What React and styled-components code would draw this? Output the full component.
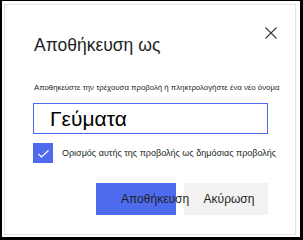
import React from "react";
import styled, { createGlobalStyle } from "styled-components";

const GlobalStyle = createGlobalStyle`
  html, body {
    margin: 0;
    padding: 0;
    background: #fff;
  }
  body {
    font-family: "Liberation Sans", Arial, sans-serif;
    color: #201f1e;
  }
`;

function App() {
  return (
    <>
      <GlobalStyle />
      <Frame>
        <Dialog>
          <Header>
            <Title>Αποθήκευση ως</Title>
            <CloseBtn aria-label="Κλείσιμο">
              <svg width="12" height="12" viewBox="0 0 12 12">
                <path
                  d="M0.5 0.5 L11.5 11.5 M11.5 0.5 L0.5 11.5"
                  stroke="#3b3a39"
                  strokeWidth="1.1"
                  fill="none"
                />
              </svg>
            </CloseBtn>
          </Header>
          <Subtitle>
            Αποθηκεύστε την τρέχουσα προβολή ή πληκτρολογήστε ένα νέο όνομα
          </Subtitle>
          <NameInput defaultValue="Γεύματα" />
          <CheckRow>
            <CheckBox>
              <svg width="20" height="20" viewBox="0 0 20 20">
                <polyline
                  points="5.5,11 8.5,14 15.5,7.5"
                  stroke="#fff"
                  strokeWidth="1.2"
                  fill="none"
                />
              </svg>
            </CheckBox>
            <CheckLabel>Ορισμός αυτής της προβολής ως δημόσιας προβολής</CheckLabel>
          </CheckRow>
          <Footer>
            <Button primary>Αποθήκευση</Button>
            <Button>Ακύρωση</Button>
          </Footer>
        </Dialog>
      </Frame>
    </>
  );
}

export default App;

const Frame = styled.div`
  box-sizing: border-box;
  width: 303px;
  height: 240px;
  border-style: solid;
  border-color: #000;
  border-width: 1px 3px 3px 2px;
  padding: 3px 4px 2px 2px;
`;

const Dialog = styled.div`
  box-sizing: border-box;
  height: 100%;
  border: 1px solid #e3e3e3;
  background: #fff;
  padding: 0 27px 0 28px;
  display: flex;
  flex-direction: column;
`;

const Header = styled.div`
  display: flex;
  justify-content: space-between;
  align-items: flex-start;
  padding-top: 12px;
`;

const Title = styled.h1`
  margin: 16px 0 0 1px;
  font-size: 17.5px;
  line-height: 24px;
  font-weight: 400;
  color: #201f1e;
`;

const CloseBtn = styled.button`
  width: 32px;
  height: 32px;
  margin-right: -19px;
  border: none;
  background: transparent;
  padding: 0;
  display: flex;
  align-items: center;
  justify-content: center;
`;

const Subtitle = styled.p`
  margin: 25px 0 0 1px;
  font-size: 7.8px;
  line-height: 12px;
  white-space: nowrap;
  color: #201f1e;
`;

const NameInput = styled.input`
  box-sizing: border-box;
  margin-top: 9px;
  width: 235px;
  height: 31px;
  border: 1px solid #4f6bed;
  padding: 0 0 0 16px;
  font-family: "Liberation Sans", Arial, sans-serif;
  font-size: 21px;
  color: #000;
  outline: none;
`;

const CheckRow = styled.div`
  display: flex;
  align-items: center;
  gap: 9px;
  margin-top: 9px;
`;

const CheckBox = styled.span`
  width: 20px;
  height: 20px;
  background: #4f6bed;
  display: flex;
`;

const CheckLabel = styled.span`
  font-size: 9px;
  line-height: 12px;
  white-space: nowrap;
  color: #201f1e;
`;

const Footer = styled.div`
  display: flex;
  justify-content: flex-end;
  gap: 8px;
  margin-top: 20px;
`;

const Button = styled.button`
  box-sizing: border-box;
  position: relative;
  z-index: ${(p) => (p.primary ? 1 : 0)};
  height: 32px;
  width: ${(p) => (p.primary ? "80px" : "84px")};
  border: none;
  border-radius: 0;
  background: ${(p) => (p.primary ? "#4f6bed" : "#f3f2f1")};
  color: #201f1e;
  font-family: "Liberation Sans", Arial, sans-serif;
  font-size: 12px;
  white-space: nowrap;
  overflow: visible;
  text-align: ${(p) => (p.primary ? "left" : "center")};
  padding: ${(p) => (p.primary ? "0 0 0 25px" : "0 0 0 6px")};
`;
